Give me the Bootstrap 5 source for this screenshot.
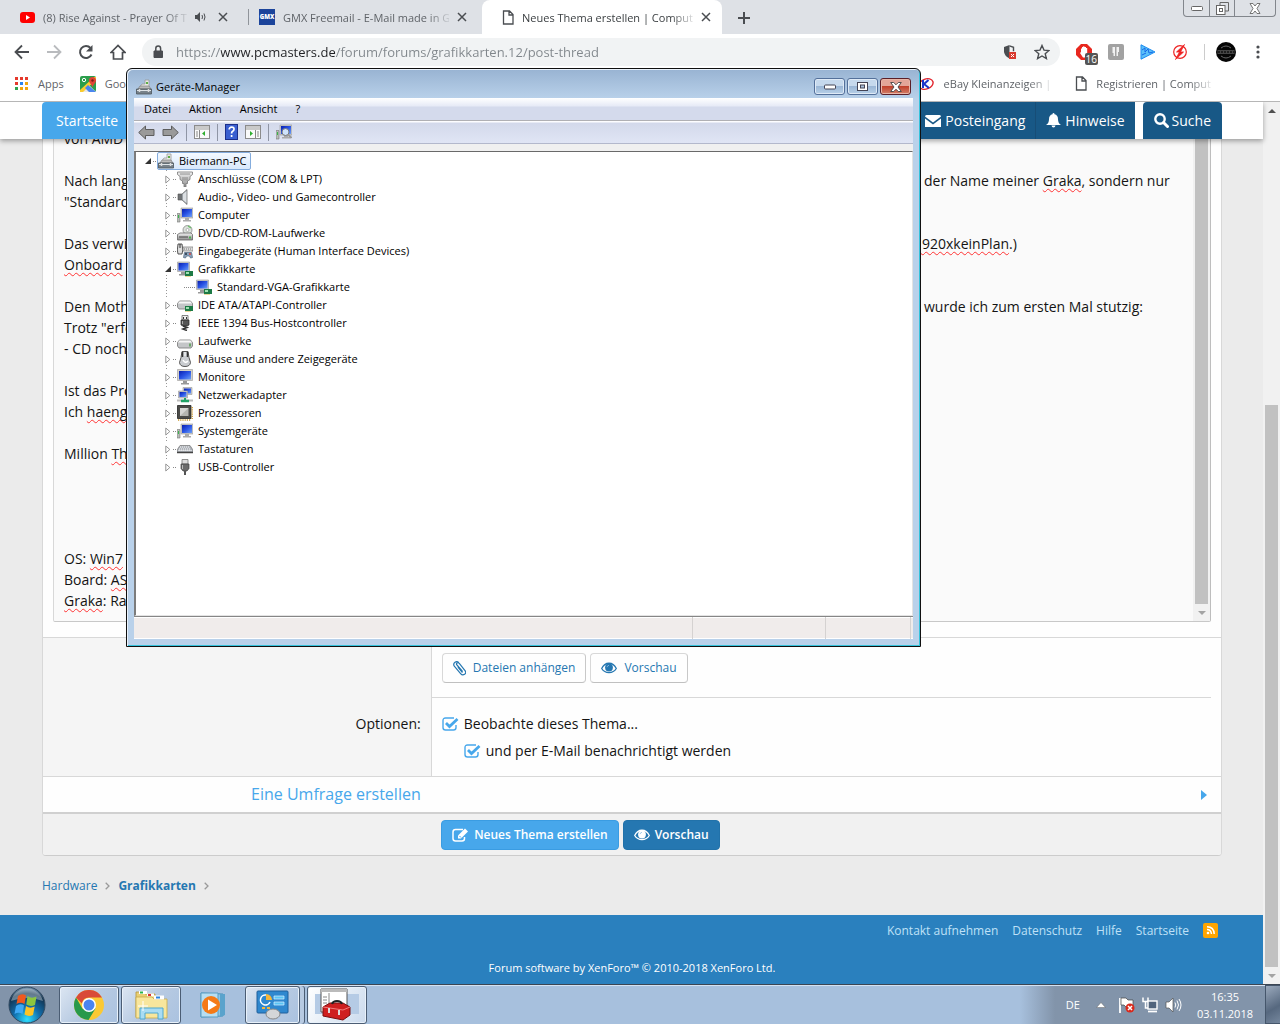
<!DOCTYPE html>
<html lang="de">
<head>
<meta charset="utf-8">
<meta name="viewport" content="width=device-width, initial-scale=1">
<title>Neues Thema erstellen | Computerforum</title>
<link href="https://cdn.jsdelivr.net/npm/bootstrap@5.3.0/dist/css/bootstrap.min.css" rel="stylesheet">
<style>
body{font-family:"Open Sans","Noto Sans",sans-serif;font-size:14px;line-height:21px;color:#141414;background:#ebebeb;height:100vh;overflow:hidden}
a{text-decoration:none}
button{font-family:inherit}
svg{display:block;flex:none}
header,.tbar,.site-nav,.site-foot,.crumbs,.submit-row,.poll-row,.form-cols{flex:none}
.plainbtn{border:0;background:none;padding:0;color:inherit;display:flex}

/* browser */
.tabstrip{background:#dee1e6;height:34px}
.tab-item{height:34px;font-size:11px;color:#5f6368;width:239px;padding:0 11px 0 20px}
.tab-item+.tab-item{width:238px}
.tab-item.current{width:240px;background:#fff;color:#3c4043;border-radius:8px 8px 0 0}
.tab-rule{width:1px;height:16px;background:#90949a;margin-top:9px;margin-left:9px;margin-right:-10px}
.tab-title{flex:1;min-width:0;white-space:nowrap;-webkit-mask-image:linear-gradient(90deg,#000 calc(100% - 22px),rgba(0,0,0,.15))}
.win-ctl{border:1px solid #82868c;border-top:0;border-radius:0 0 4px 4px;height:17px;margin-right:4px}
.win-ctl button{height:16px;width:25px;align-items:center;justify-content:center}
.win-ctl button+button{border-left:1px solid #82868c}
.win-ctl button:last-child{width:41px}
.toolbar-row{height:36px;background:#fff;padding:0 16px 0 14px}
.omnibox{background:#f1f3f4;border-radius:14px;height:28px;padding:0 10px 0 10px}
.omnibox input{flex:1;border:0;outline:0;padding:0;font-size:13px;line-height:20px;background:linear-gradient(90deg,#80868b 45px,#202124 45px,#202124 159px,#80868b 159px);-webkit-background-clip:text;background-clip:text;color:transparent}
.ext-badge{right:-6px;bottom:-5px;background:#555;color:#fff;font-size:10px;line-height:12px;border-radius:2px;padding:0 1px}
.avatar{margin-left:-5px}
.bookmarks{height:32px;background:#fff;border-bottom:1px solid #b6b6b6;font-size:11px;padding:0 69px 4px 15px}
.bookmarks a{color:#5f6368;gap:9px}
.gmx{background:#1c449b;color:#fff;font-size:6px;line-height:16px;width:16px;height:16px;text-align:center;font-weight:800}

/* scroll bars */
.sbar{width:17px;background:#f1f1f1;padding:0 2px;flex:none}
.sbar i{display:block;background:#c1c1c1}
.sbar .arr{height:17px;background:none;display:flex;align-items:center;justify-content:center}
.arr::after{content:"";border:4px solid transparent}
.arr.up::after{border-bottom-color:#505050;border-top:0}
.arr.down::after{border-top-color:#a3a3a3;border-bottom:0}

/* forum */
.site-nav{background:#fff;height:37px;padding:0 41px 0 42px;box-shadow:0 2px 5px rgba(0,0,0,.35);z-index:2;font-size:14px;font-weight:500}
.site-nav a{color:#fff;height:37px;display:flex;align-items:center;background:#185886}
.site-nav .home{background:#47a7eb;padding:0 14px;flex:1;max-width:400px;border-radius:4px 0 0 0}
.site-nav .seg{padding:0 10px;gap:4px}
.site-nav .seg+.seg{border-left:1px solid #174d76}
.search-link{border-radius:4px 4px 0 0;padding:0 11px;gap:3px;margin-left:8px}
.forum{padding:0 41px 0 42px}
.sheet{background:#fefefe;border:1px solid #d8d8d8;border-top:0;border-bottom-color:#ccc;border-radius:0 0 4px 4px}
.edit-row{padding:0 10px 15px;border-bottom:1px solid #d8d8d8}
.editor{border:1px solid #d8d8d8;border-top:0;border-right-color:#bdbdbd;border-bottom-color:#c8c8c8;background:#fafafa;border-radius:0 0 2px 2px}
.editor-text{padding:0 10px 10px;outline:0}
.editor-text p{margin:0;height:21px;flex:none;display:flex;white-space:nowrap}
.editor-text p>span{width:860px;flex:none}
.editor-text p>span.short{width:850px}
.editor-text p>b{font-weight:400;text-decoration:underline wavy #f33 1px;text-underline-offset:2px;text-decoration-skip-ink:none}
.lab-col{width:33%;flex:none;background:#f5f5f5;border-right:1px solid #d8d8d8;text-align:right;padding:75px 10px 0 0}
.attach-row{padding:15px 10px 14px;border-bottom:1px solid #d8d8d8;margin-right:10px}
.opts{padding:15px 10px;display:flex;flex-direction:column;gap:6px}
.opts .nested{margin-left:22px}
.fbtn{height:30px;border-radius:4px;font-size:12px;line-height:18px;padding:0 10px;display:inline-flex;align-items:center;gap:7px;border:1px solid #d8d8d8;border-right-color:#c8c8c8;border-bottom-color:#c0c0c0;background:#fefefe;color:#2577b1}
.fbtn.prim{background:#47a7eb;border-color:#3a9ce2;color:#fff;font-weight:600;gap:5px}
.fbtn.dark{background:#2577b1;border-color:#2272aa;color:#fff;font-weight:600;gap:5px}
.tick{appearance:none;width:17px;height:16px;margin:0 5px 0 0;background:url("data:image/svg+xml,%3Csvg xmlns='http://www.w3.org/2000/svg' viewBox='0 0 17 16'%3E%3Cpath d='M12 2H3.500Q1 2 1 4.500v7Q1 14 3.500 14h8q2.500 0 2.500-2.500V9' fill='none' stroke='%2347a7eb' stroke-width='1.400'/%3E%3Cpath d='M4 7l3.500 3.500L15.500 3' fill='none' stroke='%2347a7eb' stroke-width='2.800'/%3E%3C/svg%3E") center/17px 16px no-repeat}
.poll-row{height:38px;border-top:1px solid #d8d8d8;border-bottom:2px solid #d0d0d0;font-size:16px}
.poll-row a{color:#47a7eb;width:33%;text-align:right;padding-right:11px}
.poll-row svg{margin-right:14px}
.submit-row{background:#f1f1f1;height:41px;padding-left:33.8%}
.crumbs{font-size:12px;height:59px}
.crumbs a{color:#2577b1}
.site-foot{background:#2a80be;padding:5px 41px 0 42px;height:69px;font-size:12px}
.site-foot a{color:#bfe0f7}
.foot-links{gap:14px;padding-right:4px}
.copy-line{font-size:11px;color:#fff}
.rss{background:#ffa500;width:15px;height:15px;border-radius:2px}

/* device manager window */
.devwin{left:126px;top:68px;width:795px;height:579px;border:1px solid #101010;border-radius:6px 6px 0 0;padding:0 7px 7px 7px;box-shadow:inset 1px 1px 0 #eaf2fb,inset -1px -1px 0 #35c3dc;z-index:5;font-size:11px;line-height:16px;color:#000;background:linear-gradient(#98b3d2 0,#b9d1ea 30px)}
.dw-title{height:29px;padding:6px 2px 0}
.dw-caps{gap:2px}
.cap{width:31px;height:17px;border:1px solid #54709a;border-radius:3px;background:linear-gradient(#c6d9ed 50%,#9bb7d6 50%,#b8d0e8);box-shadow:inset 0 0 0 1px #dfeaf6;display:flex;align-items:center;justify-content:center;padding:0}
.cap.red{background:linear-gradient(#e3a598 50%,#c1412c 50%,#d2806a);border-color:#5b1f28;box-shadow:inset 0 0 0 1px #e8b6a8}
.dw-menu{height:23px;background:linear-gradient(#fff,#e6eaf6 8px,#d4daec 9px);border-bottom:1px solid #b0b0b4;padding-left:10px;gap:18px}
.dw-tools{height:23px;background:linear-gradient(#fdfdff 1px,#d3d9eb 2px,#e0e5f5);border-bottom:1px solid #b3b8cc;padding-left:4px;gap:7px}
.dw-sep{width:1px;height:17px;background:#8f95a5}
.dw-body{background:#f0f0f0;padding-top:7px}
.tree{background:#fff;border:1px solid #e3e3e3;border-top-color:#696969;border-left:2px solid #7c7c7c}
.tree ul{list-style:none;margin:0;padding:0}
.tree .tr-row{height:18px;display:flex;align-items:center}
.tree .root{padding-left:6px}
.tw{width:11px;height:12px;flex:none;display:flex;align-items:center;justify-content:center;background:#fff;position:relative;z-index:1}
.conn{width:4px;height:1px;flex:none;background:repeating-linear-gradient(90deg,#888 0 1px,transparent 1px 2px)}
.conn.wide{width:12px}
.kids{background:repeating-linear-gradient(#999 0 1px,transparent 1px 3px) 30px 0/1px calc(100% - 10px) no-repeat}
.kids>li>.tr-row{padding-left:26px}
.kids>li>.tr-row.deep{padding-left:48px}
.kids .lbl{margin-left:5px}
.sel{border:1px solid #84acdd;border-radius:2px;background:linear-gradient(#f4f9ff,#d8e8fb);height:18px;padding:0 4px 0 0;display:flex;align-items:center;gap:5px}
.dw-status{height:23px;border-top:1px solid #868686;background:#f0eceb;box-shadow:inset 0 1px #fff,inset 0 -1px #fff;padding-right:2px}
.dw-status span{border-right:1px solid #d5d2d1}

/* task bar */
.tbar{height:40px;border-top:1px solid #3c4653;background:linear-gradient(90deg,#8294aa 59px,#a7c0dd 60px,#a7c0dd calc(100% - 260px),#8294aa calc(100% - 225px));box-shadow:inset 0 1px #d4e2f2;color:#fff;font-size:11px;line-height:17px;z-index:6}
.tb-apps{gap:2px;margin-left:13px}
.tb-app{width:60px;height:38px;border:1px solid #4b5d74;border-radius:3px;background:linear-gradient(130deg,#dce6f2,#b7cae2 50%,#aac2e0);box-shadow:inset 0 0 0 1px #e8f1fa;display:flex;align-items:center;justify-content:center;padding:0}
.tb-app.flat{background:none;border-color:transparent;box-shadow:none}
.tb-app.active{background:linear-gradient(120deg,#fff,#dfe9f4 60%,#cbdaed)}
.tb-app.stacked{width:55px;margin-right:5px;box-shadow:inset 0 0 0 1px #e8f1fa,4px 0 0 0 #b7cae2,5px 0 0 0 #4b5d74}
.tray{gap:7px}
.tray .lang{margin-right:9px}
.tray .more{margin-right:6px}
.tray .clock{margin:0 12px 0 8px}
.showdesk{width:15px;height:39px;border:1px solid #45566b;border-right:0;background:linear-gradient(150deg,#9aa9bc,#56687f 60%,#75879d);padding:0;margin-left:-7px}
</style>
</head>
<body class="d-flex flex-column">
<svg width="0" height="0" class="position-absolute" aria-hidden="true">
  <defs>
    <linearGradient id="gScr" x1="0" y1="0" x2="1" y2="1"><stop offset="0" stop-color="#0a1fae"/><stop offset=".5" stop-color="#2a55e6"/><stop offset="1" stop-color="#6fa0f5"/></linearGradient>
    <linearGradient id="gMet" x1="0" y1="0" x2="0" y2="1"><stop offset="0" stop-color="#f2f2f2"/><stop offset="1" stop-color="#8d8d8d"/></linearGradient>
    <radialGradient id="gOrb" cx=".5" cy=".9" r=".9"><stop offset="0" stop-color="#2fe0ff"/><stop offset=".4" stop-color="#126fae"/><stop offset=".8" stop-color="#12334f"/><stop offset="1" stop-color="#7f9db8"/></radialGradient>
  </defs>
  <symbol id="i-x" viewBox="0 0 10 10"><path d="M1 1l8 8M9 1L1 9" stroke="#4a4d51" stroke-width="1.5"/></symbol>
  <symbol id="i-doc" viewBox="0 0 12 15"><path d="M1.500 1h6l3.500 3.500V14H1.500zM7 1v4h4" fill="none" stroke="#4a4d51" stroke-width="1.300"/></symbol>
  <symbol id="i-eye" viewBox="0 0 16 12"><path d="M.7 6.500C4-.5 12-.5 15.300 6.500 12 12 4 12 .7 6.500z" fill="none" stroke="currentColor" stroke-width="1.300"/><circle cx="8" cy="5.500" r="3.900" fill="currentColor"/><path d="M6 5.200Q6.200 3.600 8 3.300" stroke="#8fc0e6" stroke-width=".8" fill="none"/></symbol>
  <symbol id="t-dev" viewBox="0 0 16 16"><path d="M3 9l3-4h3V1h4v11H3z" fill="#e9e9e4" stroke="#999" stroke-width=".8"/><path d="M10 3h2v2h-2z" fill="#5cae44"/><path d="M4 7h9l2 3H2z" fill="#bbb" stroke="#777" stroke-width=".6"/><path d="M.5 10h15v5H.5z" fill="#77828a" stroke="#4d565c" stroke-width=".8"/><path d="M1 11.500h14" stroke="#dfe5e8"/><path d="M3.500 10v3M12.500 10v3" stroke="#ddd" stroke-width="1.500"/></symbol>
  <symbol id="t-port" viewBox="0 0 16 16"><path d="M.5 1h15v2.500L13 5.500v3L10.500 10v2.500H9V16H7v-3.500H5.500V10L3 8.500v-3L.5 3.500z" fill="url(#gMet)" stroke="#777" stroke-width=".8"/><path d="M3 3h10M6 6v3.500M8 6v3.500M10 6v3.500" stroke="#777" stroke-width=".8"/></symbol>
  <symbol id="t-aud" viewBox="0 0 16 16"><path d="M1 5h4l5-4.500v15L5 11H1z" fill="#9aa0a5" stroke="#666" stroke-width=".7"/><path d="M6 5l3.500-3v12L6 11z" fill="#dcdfe2"/><path d="M2 5v6M4 5v6" stroke="#444"/></symbol>
  <symbol id="t-pc" viewBox="0 0 16 16"><path d="M0 6.500h3V15H0z" fill="#b8bdb8" stroke="#777" stroke-width=".6"/><path d="M1 8h1v3H1z" fill="#39b54a"/><path d="M4 1h12v10H4z" fill="#ccc" stroke="#999" stroke-width=".6"/><path d="M5 2h10v8H5z" fill="url(#gScr)"/><path d="M8 11h4v2H8zM6 13h8v1.500H6z" fill="#aaa"/></symbol>
  <symbol id="t-mon" viewBox="0 0 16 16"><path d="M.5.500h15v11H.5z" fill="#d5d2c8" stroke="#999" stroke-width=".6"/><path d="M2 2h12v8.500H2z" fill="url(#gScr)"/><path d="M6 12h4v2H6zM4 14h8v1.500H4z" fill="#999"/></symbol>
  <symbol id="t-chip" viewBox="0 0 8 6"><path d="M0 0h8v5H0z" fill="#1d7a45"/><path d="M1 1h3v2H1z" fill="#9fe0b0"/><path d="M1 5v1M3 5v1M5 5v1" stroke="#d8b23c"/></symbol>
  <symbol id="t-gpu" viewBox="0 0 16 16"><path d="M.5 1h12v9.500H.5z" fill="#ccc" stroke="#999" stroke-width=".6"/><path d="M1.500 2h10v7.500h-10z" fill="url(#gScr)"/><path d="M4 11h4v2H4zM2 13h7v1.500H2z" fill="#999"/><use href="#t-chip" x="8" y="10" width="8" height="6"/></symbol>
  <symbol id="t-dvd" viewBox="0 0 16 16"><circle cx="10.500" cy="5" r="4.500" fill="#dde3dd" stroke="#888" stroke-width=".8"/><circle cx="10.500" cy="5" r="1.500" fill="#fff" stroke="#999" stroke-width=".7"/><path d="M11 1l3 2" stroke="#6cbf6a" stroke-width="1.500"/><path d="M.5 9.500L3 8h11l1.500 1.500V15H.5z" fill="url(#gMet)" stroke="#666" stroke-width=".8"/><path d="M2 12h9" stroke="#444"/><path d="M12 11.500h2v2h-2z" fill="#4caf50"/></symbol>
  <symbol id="t-hid" viewBox="0 0 16 16"><path d="M1 1h4l.8 6-.8 4H1L.3 7z" fill="#ddd" stroke="#444" stroke-width=".9"/><path d="M3 1v4" stroke="#333"/><path d="M6 4h10v4H6z" fill="#ddd" stroke="#777" stroke-width=".7"/><path d="M7 6h8" stroke="#777" stroke-dasharray="1 1"/><path d="M6.500 14.500l1-5h7l1 5-2 .5-1-2h-3l-1 2z" fill="#8ea5bd" stroke="#48607b" stroke-width=".7"/><circle cx="9" cy="11" r="1" fill="#234"/><circle cx="13" cy="11" r="1" fill="#c44"/></symbol>
  <symbol id="t-drv" viewBox="0 0 16 16"><path d="M.5 9.500L2.500 7h11l2 2.500V13L14 15H2L.5 13z" fill="#c4c6c8" stroke="#777" stroke-width=".8"/><path d="M2.500 7.500h11l1.500 2H1z" fill="#f6f6f6"/><path d="M12 10.500h2v3h-2z" fill="#6da86a"/></symbol>
  <symbol id="t-ide" viewBox="0 0 16 16"><path d="M.5 6.500L2.500 4h11l2 2.500V10L14 12H2L.5 10z" fill="#c4c6c8" stroke="#777" stroke-width=".8"/><path d="M2.500 4.500h11l1.500 2H1z" fill="#f6f6f6"/><use href="#t-chip" x="8" y="9" width="8" height="6"/></symbol>
  <symbol id="t-fw" viewBox="0 0 16 16"><path d="M5 .5h6V5H5z" fill="#eee" stroke="#666" stroke-width=".8"/><path d="M6.500 2v2M9.500 2v2" stroke="#333"/><path d="M4 5h8v5l-2 1H6l-2-1z" fill="#555" stroke="#222" stroke-width=".7"/><path d="M5.500 6v3" stroke="#aaa"/><path d="M6 11l4 1.500-4 1.500 4 1.500" stroke="#333" stroke-width="1.600" fill="none"/></symbol>
  <symbol id="t-usb" viewBox="0 0 16 16"><path d="M5 .5h6V5H5z" fill="#ddd" stroke="#777" stroke-width=".8"/><path d="M4 5h8v4.500L10 12H6L4 9.500z" fill="#6b6b6b" stroke="#444" stroke-width=".7"/><path d="M5.500 6v4" stroke="#bbb"/><path d="M8 12v4" stroke="#555" stroke-width="2"/></symbol>
  <symbol id="t-mouse" viewBox="0 0 16 16"><path d="M5 .5h6l1 6 1.500 5q-.5 4-5.500 4t-5.500-4L4 6.500z" fill="#c9ccd0" stroke="#444" stroke-width=".9"/><path d="M5.500 1v5M10.500 1v5" stroke="#333" stroke-width="1.500"/><path d="M6 9q2 4 5 1" stroke="#fff" stroke-width="1.500" fill="none"/><path d="M7.500 1h1v4h-1z" fill="#fff"/></symbol>
  <symbol id="t-net" viewBox="0 0 16 16"><path d="M6 .5h9v7H6z" fill="#ccc" stroke="#999" stroke-width=".6"/><path d="M7 1.500h7v5H7z" fill="url(#gScr)"/><path d="M1.500 4h9v7h-9z" fill="#ccc" stroke="#999" stroke-width=".6"/><path d="M2.500 5h7v5h-7z" fill="url(#gScr)"/><path d="M0 13.500h16" stroke="#bbb" stroke-width="2"/><path d="M4 14h8" stroke="#21a366" stroke-width="2.500"/><path d="M8 11v3" stroke="#21a366" stroke-width="2"/></symbol>
  <symbol id="t-cpu" viewBox="0 0 16 16"><path d="M.5.500h13.500V13.500H.5z" fill="#4b4b48" stroke="#222" stroke-width=".8"/><path d="M3 3h8.500v8H3z" fill="#b5b5b0"/><path d="M3 3h8.500L3 11z" fill="#d5d5d2"/><path d="M1 15h13M15.200 2v12" stroke="#c9962b" stroke-width="1.400" stroke-dasharray="1.200 1"/></symbol>
  <symbol id="t-kbd" viewBox="0 0 16 16"><path d="M3 4.500h10l3 4.500v2.500H0V9z" fill="#a9aeb5" stroke="#777" stroke-width=".7"/><path d="M3 6h10M2 8h12M1.500 9.500h13" stroke="#fff" stroke-dasharray="1.200 .8"/><path d="M0 11.500h16" stroke="#444" stroke-width="1.500"/></symbol>
  <symbol id="w-closed" viewBox="0 0 6 9"><path d="M.8 1v7l4-3.500z" fill="#fff" stroke="#8b8b8b" stroke-width=".9"/></symbol>
  <symbol id="w-open" viewBox="0 0 6 6"><path d="M6 0v6H0z" fill="#333"/></symbol>
</svg>

<header>
  <div class="tabstrip d-flex align-items-start">
    <div class="tab-item d-flex align-items-center gap-2">
      <svg width="15" height="11" viewBox="0 0 15 11"><rect width="15" height="11" rx="3" fill="#f00"/><path d="M6 3v5l4-2.500z" fill="#fff"/></svg>
      <span class="tab-title">(8) Rise Against - Prayer Of T</span>
      <svg width="11" height="10" viewBox="0 0 11 10"><path d="M0 3h2l3-3v10L2 7H0z" fill="#4a4d51"/><path d="M7 3q1 2 0 4M9 1.500q2 3.500 0 7" stroke="#4a4d51" fill="none"/></svg>
      <button class="plainbtn ms-1" aria-label="Tab schließen"><svg width="10" height="10"><use href="#i-x"/></svg></button>
    </div>
    <span class="tab-rule"></span>
    <div class="tab-item d-flex align-items-center gap-2 ms-0">
      <span class="gmx">GMX</span>
      <span class="tab-title">GMX Freemail - E-Mail made in G</span>
      <button class="plainbtn" aria-label="Tab schließen"><svg width="10" height="10"><use href="#i-x"/></svg></button>
    </div>
    <div class="tab-item current d-flex align-items-center gap-2 ms-1">
      <svg width="12" height="15"><use href="#i-doc"/></svg>
      <span class="tab-title">Neues Thema erstellen | Compute</span>
      <button class="plainbtn" aria-label="Tab schließen"><svg width="10" height="10"><use href="#i-x"/></svg></button>
    </div>
    <button class="plainbtn ms-3 mt-2 pt-1" aria-label="Neuer Tab"><svg width="12" height="12" viewBox="0 0 12 12"><path d="M6 0v12M0 6h12" stroke="#4a4d51" stroke-width="2"/></svg></button>
    <div class="win-ctl d-flex ms-auto">
      <button class="plainbtn" aria-label="Minimieren"><svg width="12" height="6" viewBox="0 0 12 6"><rect x=".5" y="1.500" width="11" height="4" rx="1" fill="#fff" stroke="#666"/></svg></button>
      <button class="plainbtn" aria-label="Verkleinern"><svg width="13" height="13" viewBox="0 0 13 13"><path d="M4 3.500V.5h8.500v8.500H9" fill="none" stroke="#666"/><rect x=".5" y="3.500" width="8.500" height="9" fill="#fff" stroke="#666"/><rect x="3.500" y="6.500" width="3" height="3" fill="none" stroke="#666"/></svg></button>
      <button class="plainbtn" aria-label="Schließen"><svg width="12" height="11" viewBox="0 0 12 11"><path d="M1 .5h3l2 2.500 2-2.500h3L8 5.500l3 5H8L6 8l-2 2.500H1l3-5z" fill="#fff" stroke="#666" stroke-width=".9"/></svg></button>
    </div>
  </div>

  <div class="toolbar-row d-flex align-items-center">
    <button class="plainbtn" aria-label="Zurück"><svg width="16" height="16" viewBox="0 0 16 16"><path d="M15 8H2M8 1.500L1.500 8 8 14.500" fill="none" stroke="#4a4d51" stroke-width="1.800"/></svg></button>
    <button class="plainbtn ms-3" aria-label="Vor"><svg width="16" height="16" viewBox="0 0 16 16"><path d="M1 8h13M8 1.500L14.500 8 8 14.500" fill="none" stroke="#b9bbbe" stroke-width="1.800"/></svg></button>
    <button class="plainbtn ms-3" aria-label="Neu laden"><svg width="16" height="16" viewBox="0 0 16 16"><path d="M13.500 10.500A6 6 0 1 1 12.500 4" fill="none" stroke="#4a4d51" stroke-width="2"/><path d="M14.500 1v6.500H8z" fill="#4a4d51"/></svg></button>
    <button class="plainbtn ms-3 me-3" aria-label="Startseite"><svg width="16" height="16" viewBox="0 0 16 16"><path d="M1 8.500L8 1.500l7 7h-2.500V15h-9V8.500z" fill="none" stroke="#4a4d51" stroke-width="1.700"/></svg></button>
    <div class="omnibox d-flex align-items-center flex-grow-1 me-3">
      <svg width="12" height="14" viewBox="0 0 12 14" class="me-2 ms-0"><path d="M2 6h8.500v6.500H2z" fill="#4a4d51" stroke="#4a4d51"/><path d="M3.800 6V3.500a2.300 2.300 0 0 1 4.800 0V6" fill="none" stroke="#4a4d51" stroke-width="1.500"/></svg>
      <input type="text" class="ms-1" aria-label="Adresse" value="https://www.pcmasters.de/forum/forums/grafikkarten.12/post-thread" spellcheck="false">
      <svg width="15" height="16" viewBox="0 0 15 16" class="me-3"><path d="M6.500 1L1 3v5q1 4.500 5.500 6.500z" fill="#4a4d51"/><path d="M6.500 1.800l4 1.500v4" fill="none" stroke="#4a4d51" stroke-width="1.400"/><rect x="6" y="8" width="7" height="7" fill="#d93a2f"/><path d="M8 10l3 3M11 10l-3 3" stroke="#fff"/></svg>
      <svg width="16" height="16" viewBox="0 0 16 16"><path d="M8 1.500l2 4.600 5 .4-3.800 3.200 1.200 4.900L8 12l-4.400 2.600 1.200-4.900L1 6.500l5-.4z" fill="none" stroke="#4a4d51" stroke-width="1.400"/></svg>
    </div>
    <div class="d-flex align-items-center gap-3">
      <div class="position-relative"><svg width="16" height="16" viewBox="0 0 16 16"><path d="M5 0h6l5 5v6l-5 5H5l-5-5V5z" fill="#e8281f"/><path d="M5 8V4.500h1V3h1.200v-.8h1.200V3H10v1h1.200v6L9 13.500H7L4 9z" fill="#fff"/></svg><span class="ext-badge position-absolute">16</span></div>
      <svg width="16" height="16" viewBox="0 0 16 16"><rect width="16" height="16" rx="2" fill="#a2a2a2"/><path d="M4.500 3h2.500v9H5.500v-3H4.500zM8.500 3H11v5h-1v4H8.500z" fill="#f2f2f2"/></svg>
      <svg width="16" height="16" viewBox="0 0 16 16"><path d="M1 .8v14.400L15 8z" fill="#5bc0f8" stroke="#1d8bf0"/><path d="M2 6l3-2v4l3-3 1 4 4-1M2 11l4-2" stroke="#1668e8" fill="none"/></svg>
      <svg width="16" height="16" viewBox="0 0 16 16"><circle cx="8" cy="8" r="6.300" fill="none" stroke="#e22" stroke-width="1.200"/><path d="M12.500.5L4.500 8H7.500L3.500 15.500 11.500 8H8.500z" fill="#e22" stroke="#e22" stroke-width=".8"/></svg>
      <svg width="1" height="16"><path d="M.5 0v16" stroke="#ccc"/></svg>
      <svg width="20" height="20" viewBox="0 0 20 20" class="avatar me-1"><circle cx="10" cy="10" r="10" fill="#050505"/><path d="M1.500 8h17v4h-17z" fill="#444"/><path d="M2 10h16" stroke="#111" stroke-width="1.500" stroke-dasharray="2 1"/><path d="M5 6q5-4 10 0M5 14q5 4 10 0" stroke="#666" fill="none"/></svg>
      <svg width="4" height="14" viewBox="0 0 4 14" class="me-1"><circle cx="2" cy="2" r="1.600" fill="#4a4d51"/><circle cx="2" cy="7" r="1.600" fill="#4a4d51"/><circle cx="2" cy="12" r="1.600" fill="#4a4d51"/></svg>
    </div>
  </div>

  <nav class="bookmarks d-flex align-items-center">
    <a href="#" class="d-flex align-items-center me-3"><svg width="14" height="14" viewBox="0 0 14 14"><path d="M0 0h3v3H0zM5 0h3v3H5zM10 0h3v3h-3zM0 5h3v3H0z" fill="#e5392c"/><path d="M5 5h3v3H5z" fill="#2a84f0"/><path d="M10 5h3v3h-3zM5 10h3v3H5zM10 10h3v3h-3z" fill="#f2a60c"/><path d="M0 10h3v3H0z" fill="#2ea44f"/></svg>Apps</a>
    <a href="#" class="d-flex align-items-center"><svg width="16" height="16" viewBox="0 0 16 16"><rect width="16" height="16" rx="2" fill="#2b9e4b"/><path d="M8 8l8 8H2z" fill="#e9e9e9"/><path d="M0 14L14 1h2v3L3 16H0z" fill="#f9cc2f"/><path d="M8 9l8 7H9L5 12z" fill="#4a86ee"/><path d="M12.500 1a3.500 3.500 0 0 1 3.500 3.500c0 2.500-3 4-3.500 7-.5-3-3.500-4.500-3.500-7A3.500 3.500 0 0 1 12.500 1z" fill="#de4436"/><circle cx="12.500" cy="4.500" r="1.200" fill="#7c1d14"/><circle cx="4" cy="4" r="1.700" fill="none" stroke="#fff"/></svg>Goo</a>
    <a href="#" class="d-flex align-items-center ms-auto"><svg width="17" height="14" viewBox="0 0 17 14"><ellipse cx="8" cy="7" rx="7.300" ry="5" fill="#fff" stroke="#e2242c" stroke-width="1.400" transform="rotate(-20 8 7)"/><path d="M5 3v8M10.500 3L6 7l5 4" fill="none" stroke="#1c36c9" stroke-width="2"/></svg><span class="tab-title">eBay Kleinanzeigen |</span></a>
    <a href="#" class="d-flex align-items-center ms-4"><svg width="12" height="15"><use href="#i-doc"/></svg><span class="tab-title">Registrieren | Comput</span></a>
  </nav>
</header>

<main class="d-flex flex-grow-1 overflow-hidden">
  <div class="d-flex flex-column flex-grow-1">
    <nav class="site-nav d-flex position-relative">
      <a href="#" class="home">Startseite</a>
      <a href="#" class="seg ms-auto"><svg width="16" height="12" viewBox="0 0 16 12"><path d="M0 1.500Q0 0 1.500 0h13Q16 0 16 1.500L8 7.500z" fill="#fff"/><path d="M0 3.500l8 6 8-6V12H0z" fill="#fff"/></svg>Posteingang</a>
      <a href="#" class="seg"><svg width="15" height="15" viewBox="0 0 15 15"><path d="M7.500 0q1 0 1 1.200 3.500.8 3.500 5 0 4 3 5.800H0q3-1.800 3-5.800 0-4.200 3.500-5Q6.500 0 7.500 0zM5.500 12.500h4q-.3 2-2 2t-2-2z" fill="#fff"/></svg>Hinweise</a>
      <a href="#" class="search-link"><svg width="15" height="15" viewBox="0 0 15 15"><circle cx="6" cy="6" r="4.700" fill="none" stroke="#fff" stroke-width="2.400"/><path d="M9.500 9.500l4 4" stroke="#fff" stroke-width="3" stroke-linecap="round"/></svg>Suche</a>
    </nav>

    <div class="forum flex-grow-1 d-flex flex-column overflow-hidden">
      <form class="sheet flex-grow-1 d-flex flex-column overflow-hidden" onsubmit="return false">
        <div class="edit-row flex-grow-1 d-flex overflow-hidden">
          <div class="editor d-flex flex-grow-1 overflow-hidden">
            <div class="editor-text flex-grow-1 d-flex flex-column justify-content-end overflow-hidden" contenteditable="true" role="textbox" aria-multiline="true" aria-label="Beitrag" spellcheck="false">
              <p>von AMD</p><p></p>
              <p><span>Nach lang</span>der Name meiner&nbsp;<b>Graka</b>, sondern nur</p>
              <p>"Standard</p><p></p>
              <p><span class="short">Das verwi</span><b>1920xkeinPlan</b>.)</p>
              <p><b>Onboard</b></p><p></p>
              <p><span>Den Moth</span>wurde ich zum ersten Mal stutzig:</p>
              <p>Trotz "erfo</p>
              <p>- CD noch</p><p></p>
              <p>Ist das Pro</p>
              <p>Ich&nbsp;<b>haeng</b></p><p></p>
              <p>Million&nbsp;<b>Tha</b></p><p></p><p></p><p></p><p></p>
              <p>OS:&nbsp;<b>Win7</b></p>
              <p>Board:&nbsp;<b>ASU</b></p>
              <p><b>Graka</b>: Rad</p>
            </div>
            <div class="sbar d-flex flex-column"><i class="flex-grow-1"></i><i class="arr down"></i></div>
          </div>
        </div>
        <div class="form-cols d-flex">
          <div class="lab-col">Optionen:</div>
          <div class="flex-grow-1">
            <div class="attach-row d-flex gap-1">
              <button type="button" class="fbtn"><svg width="13" height="15" viewBox="0 0 13 15"><path d="M9.500 10.500L4 4Q2.800 3 4 2t2.300.3l5.500 7q2 2.500-.2 4t-4-.7L1.500 5.500Q-.3 3 2 1.300T6 2" fill="none" stroke="#2577b1" stroke-width="1.200"/><path d="M5 6l4.500 5.500" stroke="#2577b1" stroke-width="1.200"/></svg>Dateien anhängen</button>
              <button type="button" class="fbtn"><svg width="16" height="12"><use href="#i-eye"/></svg>Vorschau</button>
            </div>
            <div class="opts">
              <label class="d-flex align-items-center"><input type="checkbox" class="tick" checked>Beobachte dieses Thema...</label>
              <label class="nested d-flex align-items-center"><input type="checkbox" class="tick" checked>und per E-Mail benachrichtigt werden</label>
            </div>
          </div>
        </div>
        <div class="poll-row d-flex align-items-center justify-content-between"><a href="#">Eine Umfrage erstellen</a><svg width="6" height="10" viewBox="0 0 6 10"><path d="M0 0v10l6-5z" fill="#47a7eb"/></svg></div>
        <div class="submit-row d-flex align-items-center gap-1">
          <button type="submit" class="fbtn prim"><svg width="17" height="14" viewBox="0 0 17 14"><path d="M11 1.500H3.500Q1 1.500 1 4v6.500Q1 13 3.500 13H10q2.500 0 2.500-2.500V9" fill="none" stroke="#fff" stroke-width="1.500"/><path d="M6 7.500L13 .5l3 3-7 7H6z" fill="#fff"/><path d="M7.500 8l1.500 1.500" stroke="#47a7eb"/></svg>Neues Thema erstellen</button>
          <button type="button" class="fbtn dark"><svg width="16" height="12"><use href="#i-eye"/></svg>Vorschau</button>
        </div>
      </form>
      <nav class="crumbs d-flex align-items-center gap-2"><a href="#">Hardware</a><svg width="5" height="8" viewBox="0 0 5 8"><path d="M.7.700L4 4 .7 7.300" fill="none" stroke="#999" stroke-width="1.300"/></svg><a href="#" class="fw-bold">Grafikkarten</a><svg width="5" height="8" viewBox="0 0 5 8"><path d="M.7.700L4 4 .7 7.300" fill="none" stroke="#999" stroke-width="1.300"/></svg></nav>
    </div>

    <footer class="site-foot">
      <div class="foot-links d-flex justify-content-end align-items-center"><a href="#">Kontakt aufnehmen</a><a href="#">Datenschutz</a><a href="#">Hilfe</a><a href="#">Startseite</a><a href="#" class="rss" aria-label="RSS"><svg width="15" height="15" viewBox="0 0 15 15"><circle cx="5" cy="10" r="1.300" fill="#fff"/><path d="M4 6.500q4 0 4.500 4.500M4 3.800q7 .2 7.200 7.200" fill="none" stroke="#fff" stroke-width="1.500"/></svg></a></div>
      <div class="copy-line text-center mt-3">Forum software by XenForo™ © 2010-2018 XenForo Ltd.</div>
    </footer>
  </div>
  <div class="sbar d-flex flex-column"><i class="arr up"></i><i style="height:286px;background:none"></i><i class="flex-grow-1"></i><i class="arr down"></i></div>
</main>

<section class="devwin position-absolute d-flex flex-column" aria-label="Geräte-Manager">
  <div class="dw-title d-flex align-items-center">
    <svg width="16" height="16" class="me-1"><use href="#t-dev"/></svg><span>Geräte-Manager</span>
    <div class="dw-caps d-flex ms-auto">
      <button class="cap" aria-label="Minimieren"><svg width="12" height="6" viewBox="0 0 12 6"><rect x=".5" y="1" width="11" height="4" rx="1" fill="#fff" stroke="#445"/></svg></button>
      <button class="cap" aria-label="Maximieren"><svg width="11" height="9" viewBox="0 0 11 9"><rect x=".5" y=".5" width="10" height="8" fill="#fff" stroke="#445"/><rect x="3.500" y="3" width="4" height="3" fill="#a8c0dc" stroke="#445"/></svg></button>
      <button class="cap red" aria-label="Schließen"><svg width="12" height="10" viewBox="0 0 12 10"><path d="M.7.500h3L6 2.800 8.300.5h3L8 5l3.300 4.500h-3L6 7.200 3.700 9.500h-3L4 5z" fill="#fff" stroke="#444" stroke-width=".9"/></svg></button>
    </div>
  </div>
  <div class="dw-menu d-flex align-items-center"><button class="plainbtn">Datei</button><button class="plainbtn">Aktion</button><button class="plainbtn">Ansicht</button><button class="plainbtn">?</button></div>
  <div class="dw-tools d-flex align-items-center">
    <button class="plainbtn" aria-label="Zurück"><svg width="17" height="15" viewBox="0 0 17 15"><path d="M.7 7.500L7.500 1v3.500H16v6H7.500V14z" fill="#9a9a9a" stroke="#5d5d5d"/></svg></button>
    <button class="plainbtn" aria-label="Vorwärts"><svg width="17" height="15" viewBox="0 0 17 15"><path d="M16.300 7.500L9.500 1v3.500H1v6h8.500V14z" fill="#9a9a9a" stroke="#5d5d5d"/></svg></button>
    <span class="dw-sep"></span>
    <button class="plainbtn" aria-label="Konsolenstruktur"><svg width="16" height="14" viewBox="0 0 16 14"><rect x=".5" y=".5" width="15" height="13" fill="#fafafa" stroke="#8b8b8b"/><path d="M1 2h14M1 4h14" stroke="#999"/><path d="M5.500 5v8M2 7h2M2 9h2M2 11h2" stroke="#888"/><path d="M11 6v5L8 8.500z" fill="#2fae2f"/></svg></button>
    <span class="dw-sep"></span>
    <button class="plainbtn" aria-label="Hilfe"><svg width="13" height="16" viewBox="0 0 13 16"><rect x=".5" y=".5" width="12" height="15" fill="#3a5fd0" stroke="#1c2f8a"/><path d="M4.200 5.500Q4.200 3.200 6.700 3.200T9 5.300Q9 6.500 7.700 7.300T6.600 9.500M6.600 11v2" fill="none" stroke="#fff" stroke-width="1.700"/></svg></button>
    <button class="plainbtn" aria-label="Aktionsbereich"><svg width="16" height="14" viewBox="0 0 16 14"><rect x=".5" y=".5" width="15" height="13" fill="#fafafa" stroke="#8b8b8b"/><path d="M1 2h14M1 4h14" stroke="#999"/><path d="M10.500 5v8M12 7h2M12 9h2M12 11h2" stroke="#888"/><path d="M5 6v5l3-2.500z" fill="#2fae2f"/></svg></button>
    <span class="dw-sep"></span>
    <button class="plainbtn" aria-label="Nach geänderter Hardware suchen"><svg width="16" height="16" viewBox="0 0 16 16"><use href="#t-pc" width="16" height="16"/><circle cx="9.500" cy="8" r="3.500" fill="#cfe3fb" stroke="#777"/><path d="M12 10.500l3.500 3.500" stroke="#999" stroke-width="2"/></svg></button>
  </div>
  <div class="dw-body flex-grow-1 d-flex flex-column">
    <div class="tree flex-grow-1">
      <ul>
        <li><div class="tr-row root"><span class="tw"><svg width="6" height="6"><use href="#w-open"/></svg></span><span class="conn"></span><span class="sel"><svg width="16" height="16"><use href="#t-dev"/></svg>Biermann-PC</span></div>
          <ul class="kids">
            <li><div class="tr-row"><span class="tw"><svg width="6" height="9"><use href="#w-closed"/></svg></span><span class="conn"></span><svg width="16" height="16"><use href="#t-port"/></svg><span class="lbl">Anschlüsse (COM &amp; LPT)</span></div></li>
            <li><div class="tr-row"><span class="tw"><svg width="6" height="9"><use href="#w-closed"/></svg></span><span class="conn"></span><svg width="16" height="16"><use href="#t-aud"/></svg><span class="lbl">Audio-, Video- und Gamecontroller</span></div></li>
            <li><div class="tr-row"><span class="tw"><svg width="6" height="9"><use href="#w-closed"/></svg></span><span class="conn"></span><svg width="16" height="16"><use href="#t-pc"/></svg><span class="lbl">Computer</span></div></li>
            <li><div class="tr-row"><span class="tw"><svg width="6" height="9"><use href="#w-closed"/></svg></span><span class="conn"></span><svg width="16" height="16"><use href="#t-dvd"/></svg><span class="lbl">DVD/CD-ROM-Laufwerke</span></div></li>
            <li><div class="tr-row"><span class="tw"><svg width="6" height="9"><use href="#w-closed"/></svg></span><span class="conn"></span><svg width="16" height="16"><use href="#t-hid"/></svg><span class="lbl">Eingabegeräte (Human Interface Devices)</span></div></li>
            <li><div class="tr-row"><span class="tw"><svg width="6" height="6"><use href="#w-open"/></svg></span><span class="conn"></span><svg width="16" height="16"><use href="#t-gpu"/></svg><span class="lbl">Grafikkarte</span></div>
              <div class="tr-row deep"><span class="conn wide"></span><svg width="16" height="16"><use href="#t-gpu"/></svg><span class="lbl">Standard-VGA-Grafikkarte</span></div></li>
            <li><div class="tr-row"><span class="tw"><svg width="6" height="9"><use href="#w-closed"/></svg></span><span class="conn"></span><svg width="16" height="16"><use href="#t-ide"/></svg><span class="lbl">IDE ATA/ATAPI-Controller</span></div></li>
            <li><div class="tr-row"><span class="tw"><svg width="6" height="9"><use href="#w-closed"/></svg></span><span class="conn"></span><svg width="16" height="16"><use href="#t-fw"/></svg><span class="lbl">IEEE 1394 Bus-Hostcontroller</span></div></li>
            <li><div class="tr-row"><span class="tw"><svg width="6" height="9"><use href="#w-closed"/></svg></span><span class="conn"></span><svg width="16" height="16"><use href="#t-drv"/></svg><span class="lbl">Laufwerke</span></div></li>
            <li><div class="tr-row"><span class="tw"><svg width="6" height="9"><use href="#w-closed"/></svg></span><span class="conn"></span><svg width="16" height="16"><use href="#t-mouse"/></svg><span class="lbl">Mäuse und andere Zeigegeräte</span></div></li>
            <li><div class="tr-row"><span class="tw"><svg width="6" height="9"><use href="#w-closed"/></svg></span><span class="conn"></span><svg width="16" height="16"><use href="#t-mon"/></svg><span class="lbl">Monitore</span></div></li>
            <li><div class="tr-row"><span class="tw"><svg width="6" height="9"><use href="#w-closed"/></svg></span><span class="conn"></span><svg width="16" height="16"><use href="#t-net"/></svg><span class="lbl">Netzwerkadapter</span></div></li>
            <li><div class="tr-row"><span class="tw"><svg width="6" height="9"><use href="#w-closed"/></svg></span><span class="conn"></span><svg width="16" height="16"><use href="#t-cpu"/></svg><span class="lbl">Prozessoren</span></div></li>
            <li><div class="tr-row"><span class="tw"><svg width="6" height="9"><use href="#w-closed"/></svg></span><span class="conn"></span><svg width="16" height="16"><use href="#t-pc"/></svg><span class="lbl">Systemgeräte</span></div></li>
            <li><div class="tr-row"><span class="tw"><svg width="6" height="9"><use href="#w-closed"/></svg></span><span class="conn"></span><svg width="16" height="16"><use href="#t-kbd"/></svg><span class="lbl">Tastaturen</span></div></li>
            <li><div class="tr-row"><span class="tw"><svg width="6" height="9"><use href="#w-closed"/></svg></span><span class="conn"></span><svg width="16" height="16"><use href="#t-usb"/></svg><span class="lbl">USB-Controller</span></div></li>
          </ul>
        </li>
      </ul>
    </div>
    <div class="dw-status d-flex"><span class="flex-grow-1"></span><span style="width:133px"></span><span style="width:85px"></span></div>
  </div>
</section>

<footer class="tbar d-flex align-items-center position-relative">
  <button class="plainbtn ms-2" aria-label="Start"><svg width="38" height="38" viewBox="0 0 38 38"><circle cx="19" cy="19" r="18" fill="url(#gOrb)" stroke="#30475e"/><path d="M3 15a16.500 16.500 0 0 1 32 0q-16-6-32 0z" fill="#fff" opacity=".35"/><path d="M10 10q4-3 8-.5l-1.500 8.500q-4-2.500-8 0z" fill="#f0591e"/><path d="M19.500 10q4 3 9 .5L27 19q-4.500 2-8.700-.5z" fill="#8cc63f"/><path d="M8 20q4-3 8-.5L14.500 28q-4-2.500-8 0z" fill="#3fa9f5"/><path d="M18 20q4 3 8.700.5L25 29q-4.500 2-8.500-.5z" fill="#fcc425"/></svg></button>
  <div class="tb-apps d-flex">
    <button class="tb-app" aria-label="Chrome"><svg width="30" height="30" viewBox="0 0 30 30"><circle cx="15" cy="15" r="15" fill="#fbc934"/><path d="M2 7.500A15 15 0 0 0 14.500 30L21.500 18.500 15 15 8.500 18.800z" fill="#28994b"/><path d="M2 7.500A15 15 0 0 1 28 7.500H15q-6 0-7 6z" fill="#d94a38"/><circle cx="15" cy="15" r="7" fill="#fff"/><circle cx="15" cy="15" r="5.500" fill="#4a85f0"/></svg></button>
    <button class="tb-app" aria-label="Explorer"><svg width="34" height="32" viewBox="0 0 34 32"><path d="M2 3h8l1 2h10v23H2z" fill="#e9cf73" stroke="#b59539" stroke-width=".8"/><path d="M5 2h8v3H5z" fill="#fff"/><path d="M6 2.500h3v2H6z" fill="#29b34a"/><path d="M13 4.500h7v3h-7z" fill="#fff"/><path d="M14 5h3v2h-3z" fill="#d33"/><path d="M2 8h16l2 2h13v19H2z" fill="#f8e69d" stroke="#c8a947" stroke-width=".8"/><path d="M20 6.500h10v4H20z" fill="#fff"/><path d="M22 7.500h4v2h-4z" fill="#2a84e0"/><path d="M6 30V19h23v11h-5v-6H11v6z" fill="#a9dcf3" stroke="#4ea8d0"/><path d="M9 12v10M4 17h10" stroke="#fff"/></svg></button>
    <button class="tb-app flat" aria-label="Media Player"><svg width="30" height="28" viewBox="0 0 30 28"><path d="M3 2l22 1v22L3 26z" fill="#8fc6e6" stroke="#4e93bb"/><path d="M22 3h5v21l-5 2z" fill="#5aa3cc"/><path d="M3 2h17v24H3z" fill="#b7def2" stroke="#5a9dc2"/><circle cx="13" cy="14" r="9" fill="#f57a16"/><path d="M10 8.500v11l9-5.500z" fill="#fff"/></svg></button>
    <button class="tb-app stacked" aria-label="Systemsteuerung"><svg width="34" height="30" viewBox="0 0 34 30"><rect x="1" y="1" width="31" height="22" rx="1" fill="#2f88cf" stroke="#1e5f9b"/><path d="M10 5a5 5 0 1 0 4 7" fill="none" stroke="#fff" stroke-width="1.500"/><path d="M10 4v6h6a6 6 0 0 0-6-6z" fill="#f6b63a"/><path d="M18 6h10v3H18zM18 12h10v3H18z" fill="#5cc4f5" stroke="#d9f1ff" stroke-width=".7"/><path d="M6 18h3M11 18h3" stroke="#f6b63a" stroke-width="2"/><ellipse cx="17" cy="24" rx="7" ry="5" fill="#d4d6d8" stroke="#888"/></svg></button>
    <button class="tb-app active" aria-label="Verwaltungskonsole"><svg width="44" height="34" viewBox="0 0 44 34"><path d="M0 6h44v20H0z" fill="#b5cbe5"/><path d="M6 1h26v23H6z" fill="#fff" stroke="#555"/><path d="M6 1h26v3H6z" fill="#bbb"/><path d="M14 5v19M8 9h4M8 12h4M8 15h4" stroke="#888"/><path d="M8 19l7-4h13l7 4v8l-7 5-20-4z" fill="#cf1f1f" stroke="#7c0e0e"/><path d="M8 19l20 3 7-3" fill="none" stroke="#f27a7a"/><path d="M17 16q1-3 5-3t5 3" fill="none" stroke="#222" stroke-width="2"/><path d="M14 20v5M24 22v5" stroke="#ddd" stroke-width="2"/></svg></button>
  </div>
  <div class="tray d-flex align-items-center ms-auto">
    <span class="lang">DE</span>
    <svg width="10" height="6" viewBox="0 0 10 6" class="more"><path d="M5 .5L9.500 5.500H.5z" fill="#fff" stroke="#666" stroke-width=".5"/></svg>
    <svg width="16" height="16" viewBox="0 0 16 16"><path d="M1 1v15" stroke="#fff" stroke-width="1.800"/><path d="M2 1h5l2 2h5v7H7L5 8H2z" fill="#fff" stroke="#444" stroke-width=".7"/><circle cx="11" cy="11" r="4.500" fill="#d9291c"/><path d="M9 9l4 4M13 9l-4 4" stroke="#fff" stroke-width="1.500"/></svg>
    <svg width="16" height="16" viewBox="0 0 16 16"><path d="M1 .5v4h5v-4M3.500 5v6H6" fill="none" stroke="#fff" stroke-width="1.500"/><rect x="6" y="4" width="9" height="8" fill="#51647c" stroke="#fff" stroke-width="1.400"/><path d="M6 14.500h9" stroke="#fff" stroke-width="1.700"/></svg>
    <svg width="17" height="16" viewBox="0 0 17 16"><path d="M1 5h3l4-4v14l-4-4H1z" fill="#fff" stroke="#555" stroke-width=".7"/><path d="M10 5.500q1.500 2.500 0 5M12 3.500q3 4.500 0 9M14 2q4 6 0 12" fill="none" stroke="#fff"/></svg>
    <div class="clock text-center"><div>16:35</div><div>03.11.2018</div></div>
    <button class="showdesk" aria-label="Desktop anzeigen"></button>
  </div>
</footer>
<script src="https://cdn.jsdelivr.net/npm/bootstrap@5.3.0/dist/js/bootstrap.bundle.min.js"></script>
</body>
</html>
